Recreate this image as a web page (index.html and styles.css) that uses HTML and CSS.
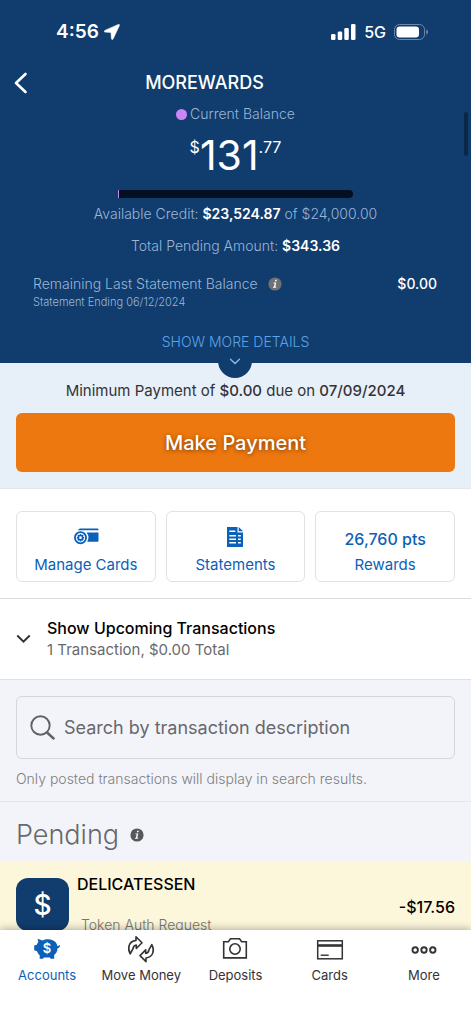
FILE: index.html
```html
<!DOCTYPE html>
<html lang="en">
<head>
<meta charset="utf-8">
<meta name="viewport" content="width=device-width, initial-scale=1">
<title>MOREWARDS</title>
<link rel="stylesheet" href="styles.css">
</head>
<body>
<div class="app">
  <main class="content">
    <header class="hero">
      <div class="status">
        <div class="status-left">
          <span class="clock">4:56</span>
          <svg width="16" height="16" viewBox="0 0 16 16" aria-hidden="true"><path d="M14.4.4.9 6.4C-.1 6.9 0 8 1 8.100L7 8.400 7.400 14.600C7.500 15.700 8.600 15.900 9.100 14.900L15.400 1.500C15.700.7 15.100.1 14.400.4Z" fill="#fff" stroke="#fff" stroke-width=".6"/></svg>
        </div>
        <div class="status-right">
          <svg width="25" height="16" viewBox="0 0 25 16" fill="#fff" aria-hidden="true"><rect x="0" y="10" width="4.500" height="6" rx="1.300"/><rect x="6.700" y="7.500" width="4.500" height="8.500" rx="1.300"/><rect x="13.300" y="4" width="4.500" height="12" rx="1.300"/><rect x="20" y="0" width="4.500" height="16" rx="1.300"/></svg>
          <span class="network">5G</span>
          <svg width="35" height="16" viewBox="0 0 35 16" aria-hidden="true"><rect x=".5" y=".5" width="30" height="15" rx="5" fill="none" stroke="#7088ab"/><rect x="2.500" y="2.500" width="22.500" height="11" rx="3.300" fill="#fff"/><path d="M32.300 5.300c2.300.8 2.300 4.600 0 5.400z" fill="#7088ab"/></svg>
        </div>
      </div>
      <div class="titlebar">
        <button class="back" type="button" aria-label="Back"><svg width="14" height="22" viewBox="0 0 14 22"><path d="M11.500 2 2 11l9.500 9" fill="none" stroke="#fff" stroke-width="2.600" stroke-linecap="round" stroke-linejoin="round"/></svg></button>
        <h1>MOREWARDS</h1>
      </div>
      <p class="balance-label"><span class="dot"></span>Current Balance</p>
      <p class="balance"><span class="minor">$</span><span class="major">131</span><span class="minor">.77</span></p>
      <div class="meter"><span class="meter-used"></span></div>
      <p class="credit">Available Credit: <b>$23,524.87</b> of $24,000.00</p>
      <p class="pending-total">Total Pending Amount: <b>$343.36</b></p>
      <div class="statement">
        <div>
          <p class="statement-name">Remaining Last Statement Balance
            <button class="info" type="button" aria-label="About this balance"><svg width="14" height="14" viewBox="0 0 14 14"><circle cx="7" cy="7" r="6.600" fill="#717174"/><path d="M7.200 2.700h1.700l-.4 1.600H6.800zM5.600 5.400h2.700L7.300 9.700h1l-.2 1H4.900l.2-.9h.8l.8-3.500H5.400z" fill="#fff"/></svg></button>
          </p>
          <p class="statement-date">Statement Ending 06/12/2024</p>
        </div>
        <b class="statement-value">$0.00</b>
      </div>
      <button class="details" type="button">SHOW MORE DETAILS
        <span class="knob"><svg width="12" height="7" viewBox="0 0 12 7"><path d="M1.500 1.200 6 5.500l4.500-4.300" fill="none" stroke="#82bdf0" stroke-width="1.400" stroke-linecap="round"/></svg></span>
      </button>
      <span class="scroll-thumb"></span>
    </header>

    <section class="payment">
      <p>Minimum Payment of <b>$0.00</b> due on <b>07/09/2024</b></p>
      <button class="pay" type="button">Make Payment</button>
    </section>

    <section class="shortcuts">
      <button class="shortcut" type="button">
        <svg width="26" height="20" viewBox="0 0 26 20" aria-hidden="true"><path d="M7 1.500h17c1 0 1.500.5 1.500 1.300v.5H4.800Q5.500 2 7 1.500Z" fill="#0b61b8"/><path d="M13.500 5.500h12v7.700c0 1-.5 1.500-1.500 1.500H14.200a8 8 0 0 0-.7-9.200Z" fill="#0b61b8"/><circle cx="7.500" cy="10.700" r="5.600" fill="#fff" stroke="#0b61b8" stroke-width="1.800"/><circle cx="7.500" cy="10.700" r="2.200" fill="none" stroke="#0b61b8" stroke-width="1.600"/><path d="M7.500 7v1.300M7.500 13.100v1.300M3.800 10.700h1.300M9.900 10.700h1.300M4.900 8.100l.9.900M9.200 12.400l.9.900M10.100 8.100l-.9.900M5.800 12.400l-.9.900" stroke="#0b61b8" stroke-width="1.500"/></svg>
        <span>Manage Cards</span>
      </button>
      <button class="shortcut" type="button">
        <svg width="16" height="20" viewBox="0 0 16 20" aria-hidden="true"><path d="M0 0h10.500v5.500H16V20H0zM11.700 0 16 4.300h-4.300z" fill="#0b61b8"/><path d="M2.300 4.300h6M2.300 8.700h6.700M11 8.700h2.800M2.300 12.200h6.700M11 12.200h2.800M2.300 15.700h6.700M11 15.700h2.800" stroke="#fff" stroke-width="1.500"/></svg>
        <span>Statements</span>
      </button>
      <button class="shortcut" type="button">
        <strong>26,760 pts</strong>
        <span>Rewards</span>
      </button>
    </section>

    <button class="upcoming" type="button" aria-expanded="false">
      <svg width="15" height="10" viewBox="0 0 15 10" aria-hidden="true"><path d="M1.300 1.500 7.500 7.700l6.200-6.200" fill="none" stroke="#333" stroke-width="2"/></svg>
      <span class="upcoming-text"><strong>Show Upcoming Transactions</strong><span>1 Transaction, $0.00 Total</span></span>
    </button>

    <section class="search">
      <label class="search-box">
        <svg width="26" height="26" viewBox="0 0 26 26" aria-hidden="true"><circle cx="10.500" cy="10.500" r="9.200" fill="none" stroke="#626265" stroke-width="1.900"/><path d="m17 17.500 7.300 6.600" stroke="#626265" stroke-width="2.600"/></svg>
        <input type="search" placeholder="Search by transaction description" aria-label="Search by transaction description">
      </label>
      <p>Only posted transactions will display in search results.</p>
    </section>

    <section class="pending">
      <h2>Pending
        <button class="info" type="button" aria-label="About pending transactions"><svg width="14" height="14" viewBox="0 0 14 14"><circle cx="7" cy="7" r="6.600" fill="#57585c"/><path d="M7.200 2.700h1.700l-.4 1.600H6.800zM5.600 5.400h2.700L7.300 9.700h1l-.2 1H4.900l.2-.9h.8l.8-3.500H5.400z" fill="#fff"/></svg></button>
      </h2>
      <article class="transaction">
        <span class="merchant-icon">$</span>
        <div class="merchant"><h3>DELICATESSEN</h3><p>Token Auth Request</p></div>
        <b class="amount">-$17.56</b>
      </article>
    </section>
  </main>

  <nav class="tabs">
    <a class="tab active" href="#accounts"><svg width="28" height="28" viewBox="0 0 28 28" aria-hidden="true"><path d="M4.500 3.800 9.500 5.500C13 3.600 18.500 3.600 21.500 6.300c1.700 1.400 2.600 3.200 3 5 .8 0 1.300-.4 1.600-1.200l1 .5c-.3 1.700-1.200 2.500-2.500 2.600-.2 3.400-1.700 5.400-3.400 6.800v3.700h-3.600l-.6-1.200H10.800l-.7 1.200H6.700V20.300C5.600 19.200 4.700 18 4 16.300L1.200 15.200v-4.600l2.600-.9c.4-1.100.9-2 1.600-2.700Z" fill="#0b61b8"/><text x="14" y="18" text-anchor="middle" class="pig-mark">$</text></svg>Accounts</a>
    <a class="tab" href="#move"><svg width="28" height="28" viewBox="0 0 28 28" aria-hidden="true"><g fill="none" stroke="#333335" stroke-width="1.600" stroke-linejoin="round"><path d="M9 1.800 15 7.800 9.300 13.500V10C7.200 10.300 6.300 11.500 6.100 13.500L3.200 18.800C.4 13.500 1.300 6.500 9 5.400Z"/><path d="M19 26.600 13 20.600 18.700 14.900V18.400C20.800 18.100 21.700 16.900 21.900 14.900L24.800 9.600C27.600 14.900 26.700 21.900 19 23Z"/></g></svg>Move Money</a>
    <a class="tab" href="#deposits"><svg width="28" height="28" viewBox="0 0 28 28" aria-hidden="true"><g fill="none" stroke="#333335" stroke-width="1.600"><path d="M2.700 6.700H7.300L9.500 3.800h9l2.200 2.900h4.600v16.200H2.700Z"/><circle cx="14" cy="14" r="5.200"/></g></svg>Deposits</a>
    <a class="tab" href="#cards"><svg width="28" height="28" viewBox="0 0 28 28" aria-hidden="true"><g fill="none" stroke="#333335"><rect x="1.700" y="5.800" width="24.600" height="18" stroke-width="1.500"/><path d="M2 10.500h24" stroke-width="2.600"/><path d="M4.700 20.200h8" stroke-width="1.400"/></g></svg>Cards</a>
    <a class="tab" href="#more"><svg width="28" height="28" viewBox="0 0 28 28" aria-hidden="true"><g fill="none" stroke="#333335" stroke-width="1.900"><circle cx="5.200" cy="15" r="2.700"/><circle cx="14" cy="15" r="2.700"/><circle cx="22.800" cy="15" r="2.700"/></g></svg>More</a>
  </nav>
</div>
</body>
</html>
```
FILE: styles.css
```css
* { box-sizing: border-box; }
body { margin: 0; font-family: Inter, "Liberation Sans", sans-serif; font-size: 14px; line-height: 20px; color: #333335; }
p, h1, h2, h3 { margin: 0; }
button { font: inherit; color: inherit; border: 0; padding: 0; margin: 0; background: none; }
svg { display: block; flex: none; }
b, strong { font-weight: 600; }

.app { display: flex; flex-direction: column; height: 100vh; background: #fff; }
.content { flex: 1; min-height: 0; overflow: auto; scrollbar-width: none; }

.hero { position: relative; display: flex; flex-direction: column; align-items: center; background: #103c6e; color: #9ab6d6; font-weight: 300; padding-top: 20px; }
.hero b { color: #fff; }
.status { align-self: stretch; display: flex; justify-content: space-between; align-items: center; height: 24px; padding: 0 42px 0 56px; color: #fff; }
.status-left { display: flex; align-items: center; gap: 5px; }
.status-right { display: flex; align-items: center; gap: 8px; }
.clock { font-size: 19px; font-weight: 600; }
.network { font-size: 16px; font-weight: 500; }
.status-right { padding-left: 2px; }
.titlebar { align-self: stretch; display: grid; grid-template-columns: 40px 1fr 102px; align-items: center; height: 24px; margin-top: 27px; padding: 0 14px; color: #fff; }
.titlebar h1 { font-size: 18px; font-weight: 500; line-height: 24px; text-align: center; }
.balance-label { display: flex; align-items: center; gap: 3px; margin-top: 9px; }
.dot { width: 11px; height: 11px; border-radius: 50%; background: #cb86f5; }
.balance { display: flex; align-items: flex-start; color: #fff; height: 48px; margin-top: 7px; }
.major { font-size: 41px; line-height: 48px; font-weight: 400; }
.minor { font-size: 16px; line-height: 32px; font-weight: 400; }
.meter { width: 50%; height: 8px; margin-top: 11px; overflow: hidden; border-radius: 0 4px 4px 0; background: #04101f; }
.meter-used { display: block; width: 1px; height: 8px; background: #cb86f5; }
.credit { margin-top: 6px; }
.pending-total { margin-top: 12px; }
.statement { align-self: stretch; display: flex; justify-content: space-between; margin-top: 18px; padding: 0 34px 0 33px; }
.statement-name { display: flex; align-items: center; gap: 10px; }
.statement-date { font-size: 11px; line-height: 16px; }
.statement-value { font-weight: 500; }
.details { position: relative; isolation: isolate; height: 32px; margin-top: 21px; padding-bottom: 10px; color: #5ba4e6; font-weight: 300; }
.knob { position: absolute; left: 50%; bottom: -15px; width: 34px; height: 34px; margin-left: -17px; border-radius: 50%; display: flex; align-items: center; justify-content: center; background: #103c6e; z-index: -1; }
.scroll-thumb { position: absolute; top: 112px; right: 3px; width: 4px; height: 44px; border-radius: 2px; background: #0a2747; }

.payment { padding: 18px 16px 16px; background: #e7eff9; border-bottom: 1px solid #e3e6ea; text-align: center; font-size: 15px; }
.payment b { font-weight: 500; }
.pay { display: block; width: 100%; height: 59px; margin-top: 12px; border-radius: 6px; background: #ed780f; color: #fff; font-size: 20px; font-weight: 500; text-shadow: 0 1px 4px rgba(70, 30, 0, .7); }

.shortcuts { display: grid; grid-template-columns: repeat(3, 1fr); gap: 10px; padding: 22px 16px 16px; border-bottom: 1px solid #dcdcde; }
.shortcut { display: flex; flex-direction: column; align-items: center; justify-content: flex-end; gap: 8px; height: 71px; padding-bottom: 6px; border: 1px solid #e3e2e3; border-radius: 6px; color: #0b61b8; font-size: 15px; }
.shortcut strong { font-size: 16px; font-weight: 500; margin-bottom: -2px; }

.upcoming { display: flex; align-items: center; gap: 16px; width: 100%; height: 81px; padding: 0 16px; border-bottom: 1px solid #e0e0e2; text-align: left; font-size: 15px; }
.upcoming-text { display: flex; flex-direction: column; gap: 2px; color: #6a6a6d; }
.upcoming-text strong { font-size: 16px; color: #000; font-weight: 500; }

.search { padding: 16px 16px 12px; background: #f3f4f9; border-bottom: 1px solid #e5e6ea; color: #7c7d82; font-size: 14px; font-weight: 300; }
.search-box { display: flex; align-items: center; gap: 8px; height: 63px; padding: 0 13px; margin-bottom: 10px; border: 1px solid #d5d6da; border-radius: 6px; }
.search-box input { flex: 1; min-width: 0; border: 0; padding: 0; outline: 0; background: transparent; font: 400 18px/24px Inter, sans-serif; color: #333335; }
.search-box input::placeholder { color: #67686c; opacity: 1; }

.pending { background: #f3f4f9; }
.pending h2 { display: flex; align-items: center; gap: 11px; height: 59px; padding: 6px 16px 0; font-size: 27px; line-height: 32px; font-weight: 300; color: #67686c; }
.transaction { display: flex; align-items: flex-start; gap: 8px; padding: 17px 16px; background: #fcf6db; }
.merchant-icon { display: flex; align-items: center; justify-content: center; width: 53px; height: 53px; border-radius: 12px; background: #103c6e; color: #fff; font-size: 28px; font-weight: 500; }
.merchant { flex: 1; display: flex; flex-direction: column; gap: 21px; margin-top: -4px; }
.merchant h3 { font-size: 16px; line-height: 20px; font-weight: 500; color: #000; }
.merchant p { padding-left: 4px; font-weight: 300; color: #77756b; }
.amount { align-self: center; font-size: 16px; font-weight: 500; color: #000; }

.tabs { position: relative; display: grid; grid-template-columns: repeat(5, 1fr); height: 91px; padding-top: 5px; background: #fff; box-shadow: 0 -1px 8px rgba(0, 0, 0, .3); }
.tab { display: flex; flex-direction: column; align-items: center; gap: 2px; color: #333335; font-size: 13px; text-decoration: none; white-space: nowrap; }
.active { color: #0b61b8; }
.pig-mark { fill: #fff; font-size: 13px; font-weight: 600; }
```
